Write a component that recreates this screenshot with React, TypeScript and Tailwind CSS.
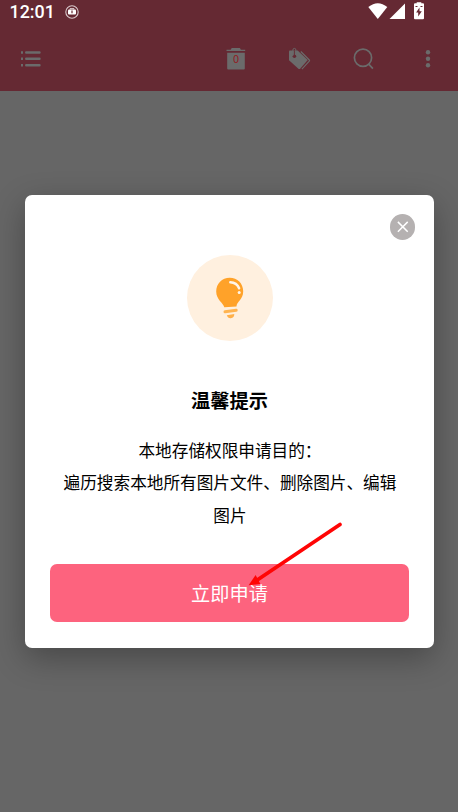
import React from 'react';

function StatusBar() {
  return (
    <div className="flex h-6 items-center pl-[9.5px] pr-[33px] text-white">
      <span className="w-[55px] font-[Roboto,sans-serif] text-[17.9px] font-medium leading-6">12:01</span>
      <svg className="h-[14px] w-[14px]" viewBox="0 0 14 14" fill="none">
        <circle cx="7" cy="7" r="6.2" stroke="#d9c9cc" strokeWidth="1.1" />
        <rect x="3" y="4.5" width="8" height="5" rx="1" fill="white" />
        <path d="M5 4.5V3.7h4v.8" stroke="#e5d9dc" />
        <path d="M7 5.5v2.7" stroke="#652933" strokeWidth="1.2" />
      </svg>
      <svg className="ml-auto h-5 w-[58px]" viewBox="367 2 58 20" fill="white">
        <path d="M368.3 7.1Q377.8-.8 387.3 7.1L377.8 19Z" />
        <path d="M405 3.5V19H389.5Z" />
        <path d="M414 4.2q0-1 1-1h1.7V2.2h4.6v1h1.7q1 0 1 1v14q0 1-1 1h-8q-1 0-1-1Z" />
        <path d="M415.5 6.5h2M420.5 6.5h2" stroke="#652933" strokeWidth="1" />
        <path d="M419.5 7.5l-3.4 5h2.1v4l3.6-5.2h-2.3Z" fill="#652933" />
      </svg>
    </div>
  );
}

function Toolbar() {
  return (
    <div className="flex h-[67px] items-center pl-[20px] pr-[20px] pt-[2px] text-[#6b6b6b]">
      <svg className="h-5 w-[22px]" viewBox="20 49 22 20" stroke="currentColor" strokeWidth="2.4">
        <path d="M21 52.5h2M21 58.8h2M21 65.2h2" />
        <path d="M26.2 52.5h13.3M26.2 58.8h13.3M26.2 65.2h13.3" strokeLinecap="round" />
      </svg>
      <svg className="ml-[184px] h-6 w-5" viewBox="226 47 20 24" fill="currentColor">
        <path d="M226.5 51v-1.2h4.2l1-1.8h8.2l1 1.8h4.3V51ZM227.2 52.7h17.6V68.4q0 1-1 1H228.2q-1 0-1-1Z" />
        <text x="236" y="63" textAnchor="middle" fill="#921c23" className="font-['Noto_Sans_CJK_SC',sans-serif] text-[11px]">0</text>
      </svg>
      <svg className="ml-[42px] h-6 w-6" viewBox="288 47 24 24">
        <path d="M289.8 50.6h7.9l10 9.5-7.8 9h-1.2L289 60.2v-8.7q0-.9.8-.9Z" fill="currentColor" />
        <path d="M300.8 51.5l8.5 8.5q.6.6 0 1.2l-7.4 8" fill="none" stroke="currentColor" strokeWidth="1.1" />
        <circle cx="294.4" cy="56.2" r="1.8" fill="#652933" />
        <path d="M292.9 56v-6q0-1.6 1.5-1.6t1.5 1.6v5" fill="none" stroke="currentColor" strokeWidth=".9" />
        <path d="M294.4 50.5v5.5" stroke="#652933" strokeWidth=".9" />
      </svg>
      <svg className="ml-[41px] h-6 w-6" viewBox="353 47 24 24" fill="none" stroke="currentColor" strokeWidth="1.7">
        <circle cx="363" cy="57.8" r="8.6" />
        <path d="M368.7 64.2l4.2 4.4" />
      </svg>
      <svg className="ml-auto h-5 w-5" viewBox="418 49 20 20" fill="currentColor">
        <circle cx="428" cy="52.3" r="2.2" />
        <circle cx="428" cy="58.8" r="2.2" />
        <circle cx="428" cy="65.2" r="2.2" />
      </svg>
    </div>
  );
}

function PermissionDialog() {
  return (
    <section className="relative ml-[24.6px] mt-[104px] flex h-[453px] w-[409.8px] flex-col items-center rounded-[7px] bg-white px-[25px] shadow-[0_10px_32px_rgba(0,0,0,0.3)]">
      <button aria-label="关闭" className="absolute right-[19px] top-[19px] h-[26px] w-[25.6px] rounded-full bg-[#b5b1b1]">
        <svg viewBox="0 0 26 26" stroke="white" strokeWidth="1.5">
          <path d="M8 8l10 10M18 8L8 18" />
        </svg>
      </button>
      <div className="ml-[1px] mt-[60px] h-[86px] w-[86px] rounded-full bg-[#fff0df]">
        <svg viewBox="187 255 86 86" fill="none">
          <path d="M224.3 307.3C223.5 303 216.2 299.8 216.2 291.5C216.2 283.5 222 277.7 229.7 277.7C237.4 277.7 243.2 283.5 243.2 291.2C243.2 299.7 236.5 301.8 236.5 306.4Z" fill="#ffa229" />
          <path d="M230.3 282.2Q236.8 282.4 239.1 288.3" stroke="#fff5ea" strokeWidth="2.5" strokeLinecap="round" />
          <circle cx="239.2" cy="292.4" r="1.5" fill="#fff5ea" />
          <path d="M225 311.8L236.2 310.2" stroke="#ffb451" strokeWidth="3" strokeLinecap="round" />
          <path d="M226.8 315.3L234.3 314.1Q234.3 318 230.8 318.2Q227.8 318.4 226.8 315.3Z" fill="#ffb04a" />
        </svg>
      </div>
      <h1 className="mt-[45px] text-[19.2px] font-bold leading-7">温馨提示</h1>
      <div className="ml-[1px] mt-[19.6px] w-[350px] whitespace-nowrap text-center text-[16.65px] leading-[32.5px]">
        <p>本地存储权限申请目的：</p>
        <p>遍历搜索本地所有图片文件、删除图片、编辑</p>
        <p>图片</p>
      </div>
      <button className="mt-[32.9px] h-[58px] w-[359px] shrink-0 rounded-[7px] bg-[#fd637e] text-[19.2px] leading-[58px] text-white">
        立即申请
      </button>
      <svg className="pointer-events-none absolute left-[220.4px] top-[324px] h-[70px] w-[100px]" viewBox="245 519 100 70">
        <path d="M340 524.5L258 579.5" stroke="#ff0505" strokeWidth="3.8" strokeLinecap="round" />
        <path d="M248.6 585.3l7-10.2 4.8 8.9Z" fill="#ff0505" />
      </svg>
    </section>
  );
}

export default function App() {
  return (
    <main className="h-[812px] w-[458px] overflow-hidden bg-[#666] font-['Noto_Sans_CJK_SC',sans-serif] text-black">
      <header className="h-[91px] bg-[#652933]">
        <StatusBar />
        <Toolbar />
      </header>
      <PermissionDialog />
    </main>
  );
}
